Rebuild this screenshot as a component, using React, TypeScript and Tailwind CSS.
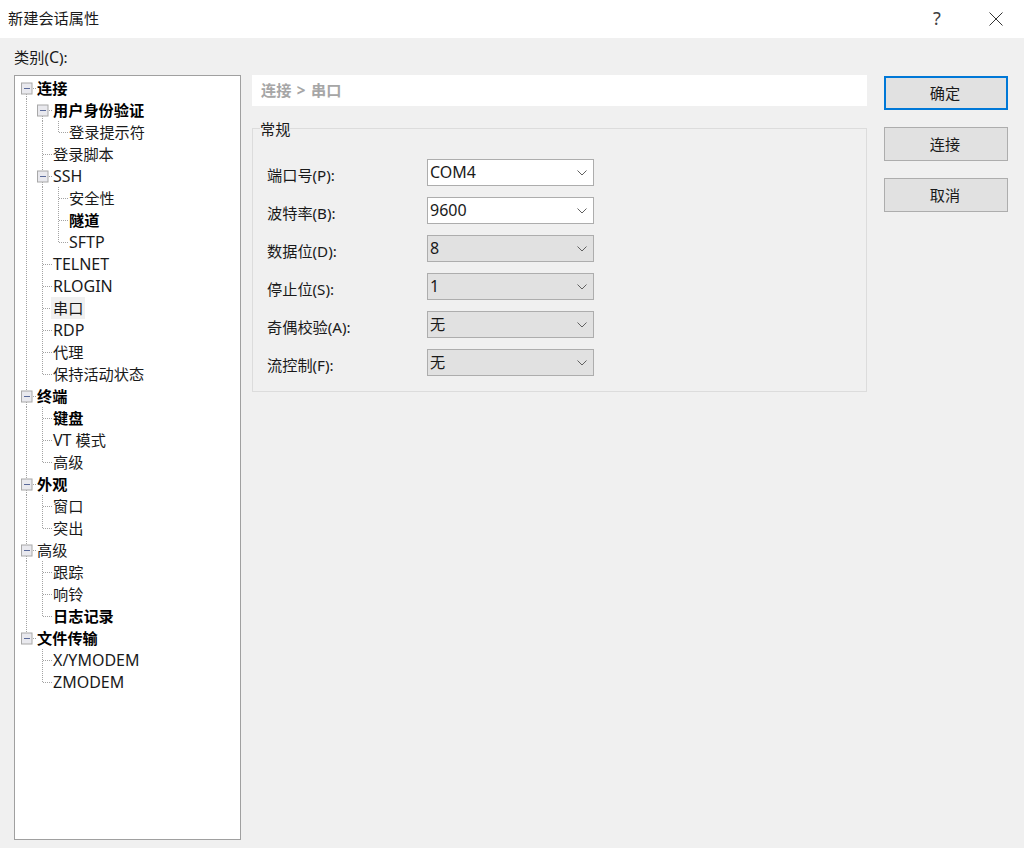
import React from 'react';

const FONT = "font-['Noto_Sans','Noto_Sans_CJK_SC',sans-serif]";

type Cell = 'blank' | 'pipe' | 'tee' | 'elbow' | 'box' | 'boxFirst' | 'boxLast';

const LINE = '#a3a3a3';

// one 16x22 column of tree connector
const TreeCell: React.FC<{ kind: Cell }> = ({ kind }) => {
  const hasBox = kind === 'box' || kind === 'boxFirst' || kind === 'boxLast';
  return (
    <svg width="16" height="22" viewBox="0 0 16 22" className="shrink-0 block">
      <g stroke={LINE} strokeWidth="1" strokeDasharray="1 1" fill="none">
        {(kind === 'pipe' || kind === 'tee') && <path d="M5.5 0V22" />}
        {kind === 'elbow' && <path d="M5.5 0V11" />}
        {(kind === 'tee' || kind === 'elbow') && <path d="M6 11.5H15" />}
        {(kind === 'box' || kind === 'boxLast') && <path d="M5.5 0V6" />}
        {(kind === 'box' || kind === 'boxFirst') && <path d="M5.5 17V22" />}
        {hasBox && <path d="M12 11.5H15" />}
      </g>
      {hasBox && (
        <g>
          <rect x="0.5" y="6" width="10.5" height="11" fill="#e9e9ee" stroke="#a8a8a8" />
          <path d="M3 11.5H9" stroke="#5a6a9a" strokeWidth="1" />
        </g>
      )}
    </svg>
  );
};

// Segoe's latin runs wider than Noto Sans at the same size, so latin gets its own size
const Mixed: React.FC<{ text: string }> = ({ text }) => (
  <>
    {text.split(/([A-Za-z0-9/]+)/).map((part, i) =>
      i % 2 === 1 ? (
        <span key={i} className="text-[16px]">
          {part}
        </span>
      ) : (
        part
      ),
    )}
  </>
);

type Node = { label: string; cells: Cell[]; bold?: boolean; selected?: boolean };

const tree: Node[] = [
  { label: '连接', cells: ['boxFirst'], bold: true },
  { label: '用户身份验证', cells: ['pipe', 'boxFirst'], bold: true },
  { label: '登录提示符', cells: ['pipe', 'pipe', 'elbow'] },
  { label: '登录脚本', cells: ['pipe', 'tee'] },
  { label: 'SSH', cells: ['pipe', 'box'] },
  { label: '安全性', cells: ['pipe', 'pipe', 'tee'] },
  { label: '隧道', cells: ['pipe', 'pipe', 'tee'], bold: true },
  { label: 'SFTP', cells: ['pipe', 'pipe', 'elbow'] },
  { label: 'TELNET', cells: ['pipe', 'tee'] },
  { label: 'RLOGIN', cells: ['pipe', 'tee'] },
  { label: '串口', cells: ['pipe', 'tee'], selected: true },
  { label: 'RDP', cells: ['pipe', 'tee'] },
  { label: '代理', cells: ['pipe', 'tee'] },
  { label: '保持活动状态', cells: ['pipe', 'elbow'] },
  { label: '终端', cells: ['box'], bold: true },
  { label: '键盘', cells: ['pipe', 'tee'], bold: true },
  { label: 'VT 模式', cells: ['pipe', 'tee'] },
  { label: '高级', cells: ['pipe', 'elbow'] },
  { label: '外观', cells: ['box'], bold: true },
  { label: '窗口', cells: ['pipe', 'tee'] },
  { label: '突出', cells: ['pipe', 'elbow'] },
  { label: '高级', cells: ['box'] },
  { label: '跟踪', cells: ['pipe', 'tee'] },
  { label: '响铃', cells: ['pipe', 'tee'] },
  { label: '日志记录', cells: ['pipe', 'elbow'], bold: true },
  { label: '文件传输', cells: ['boxLast'], bold: true },
  { label: 'X/YMODEM', cells: ['blank', 'tee'] },
  { label: 'ZMODEM', cells: ['blank', 'elbow'] },
];

const fields = [
  { label: '端口号(P):', value: 'COM4', editable: true },
  { label: '波特率(B):', value: '9600', editable: true },
  { label: '数据位(D):', value: '8' },
  { label: '停止位(S):', value: '1' },
  { label: '奇偶校验(A):', value: '无' },
  { label: '流控制(F):', value: '无' },
];

const Chevron = () => (
  <svg width="10" height="6" viewBox="0 0 10 6" className="shrink-0">
    <path d="M0.5 0.5L5 5L9.5 0.5" fill="none" stroke="#606060" strokeWidth="1" />
  </svg>
);

export default function App() {
  return (
    <div className={`${FONT} w-[1024px] h-[848px] bg-[#f0f0f0] text-[15.2px] leading-[22px] text-[#1a1a1a] overflow-hidden`}>
      <div className="h-[38px] bg-white flex items-center pl-2">
        <span className="flex-1 -mt-[2px]">新建会话属性</span>
        <span className="text-[18px] text-[#404040] w-[12px] mr-[44px] -mt-[2px]">?</span>
        <svg width="14" height="14" viewBox="0 0 14 14" className="mr-[21px] -mt-[1px]">
          <path d="M0.5 0.5L13.5 13.5M13.5 0.5L0.5 13.5" stroke="#333333" strokeWidth="1" fill="none" />
        </svg>
      </div>

      <div className="flex pl-[14px]">
        <div className="w-[227px] shrink-0">
          <div className="h-[37px] pt-[8px]">
            <Mixed text="类别(C):" />
          </div>
          <div className="h-[765px] bg-white border border-[#a0a0a0] pl-[6px] pt-[1px]">
            {tree.map((node, i) => (
              <div key={i} className="flex h-[22px] items-center">
                {node.cells.map((c, j) => (
                  <TreeCell key={j} kind={c} />
                ))}
                <span
                  className={`-ml-[2px] px-[2px] h-[22px] whitespace-nowrap ${node.bold ? 'font-bold text-black' : ''} ${
                    node.selected ? 'bg-[#f0f0f0]' : ''
                  }`}
                >
                  <Mixed text={node.label} />
                </span>
              </div>
            ))}
          </div>
        </div>

        <div className="w-[615px] ml-[11px] shrink-0 pt-[37px]">
          <div className="h-[31px] bg-white pl-[9px] pb-[2px] flex items-center font-bold text-[#a6a6a6] [word-spacing:1.5px]">
            连接 &gt; 串口
          </div>
          <fieldset className="mt-[11px] h-[275px] border border-[#dcdcdc] pl-[14px] pr-0 m-0">
            <legend className="ml-[-7px] px-[0px] h-[22px] pt-[1px]">常规</legend>
            <div className="pt-[20px] flex flex-col gap-[11px]">
              {fields.map((f) => (
                <div key={f.label} className="flex h-[27px]">
                  <span className="w-[160px] pt-[5px] whitespace-nowrap">{f.label}</span>
                  <div
                    className={`w-[167px] h-[27px] flex items-center pl-[2px] pr-[6px] border border-[#adadad] ${
                      f.editable ? 'bg-white' : 'bg-[#e1e1e1]'
                    }`}
                  >
                    <span className="flex-1 -mt-[2px]">
                      <Mixed text={f.value} />
                    </span>
                    <Chevron />
                  </div>
                </div>
              ))}
            </div>
          </fieldset>
        </div>

        <div className="w-[124px] ml-[17px] shrink-0 pt-[38px] flex flex-col gap-[17px]">
          <div className="h-[34px] bg-[#e1e1e1] border-2 border-[#0078d7] flex items-center justify-center pr-[2px]">确定</div>
          <div className="h-[34px] bg-[#e1e1e1] border border-[#adadad] flex items-center justify-center pr-[2px]">连接</div>
          <div className="h-[34px] bg-[#e1e1e1] border border-[#adadad] flex items-center justify-center pr-[2px]">取消</div>
        </div>
      </div>
    </div>
  );
}
